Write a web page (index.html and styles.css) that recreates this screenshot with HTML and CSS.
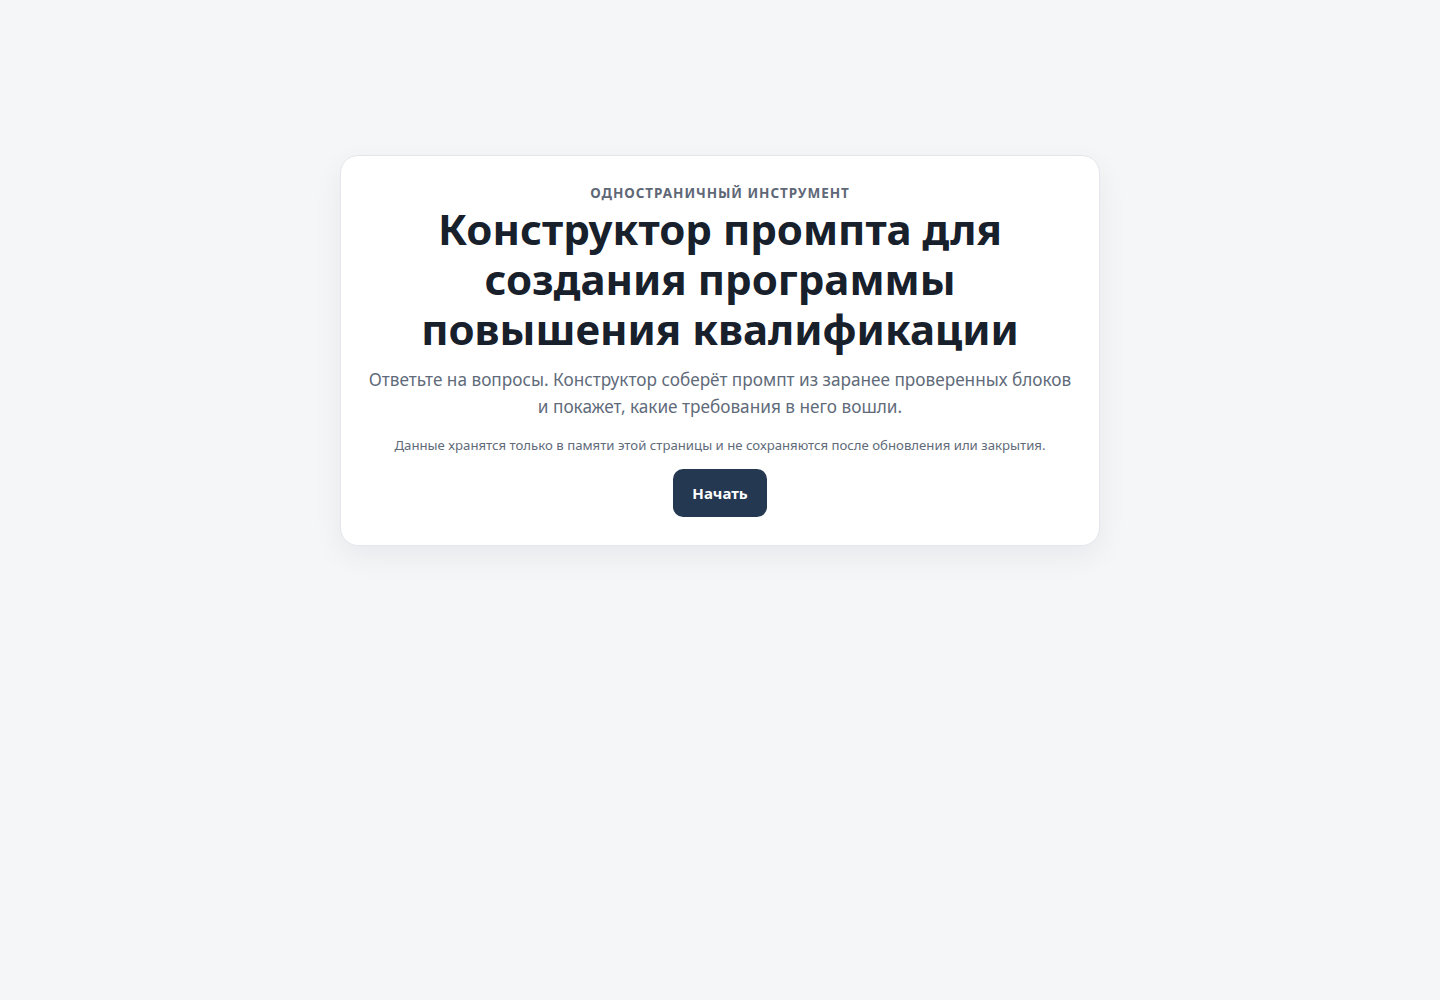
FILE: index.html
```html
<!DOCTYPE html>
<html lang="ru">
<head>
<meta charset="utf-8">
<title>Конструктор промпта</title>
<link rel="stylesheet" href="styles.css">
</head>
<body>
<main class="page">
  <section class="card">
    <div class="eyebrow">Одностраничный инструмент</div>
    <h1 class="title">Конструктор промпта для создания программы повышения квалификации</h1>
    <p class="lead">Ответьте на вопросы. Конструктор соберёт промпт из заранее проверенных блоков и покажет, какие требования в него вошли.</p>
    <p class="note">Данные хранятся только в памяти этой страницы и не сохраняются после обновления или закрытия.</p>
    <button class="btn" type="button">Начать</button>
  </section>
</main>
</body>
</html>
```

FILE: styles.css
```css
html, body {
  margin: 0;
  padding: 0;
}
body {
  background: #f4f6f8;
  font-family: "Noto Sans", "Open Sans", "DejaVu Sans", sans-serif;
  color: #111827;
}
.page {
  display: flex;
  justify-content: center;
  padding: 155px 24px 40px;
}
.card {
  box-sizing: border-box;
  width: 760px;
  background: #ffffff;
  border: 1px solid #e3e6eb;
  border-radius: 18px;
  box-shadow: 0 10px 30px rgba(17, 24, 39, 0.06);
  padding: 27px 27px 28px;
  display: flex;
  flex-direction: column;
  align-items: center;
  text-align: center;
}
.eyebrow {
  font-size: 13.5px;
  font-weight: 700;
  letter-spacing: 0.07em;
  text-transform: uppercase;
  color: #5f6877;
  line-height: 20px;
}
.title {
  margin: 1px 0 0;
  font-size: 42px;
  line-height: 50px;
  font-weight: 700;
  color: #17202b;
  max-width: 640px;
}
.lead {
  margin: 12px 0 0;
  font-size: 17.2px;
  line-height: 27px;
  color: #5f6b7a;
}
.note {
  margin: 15px 0 0;
  font-size: 13.2px;
  line-height: 20px;
  color: #5f6b7a;
}
.btn {
  margin-top: 14px;
  height: 48px;
  padding: 0 19px;
  border: 0;
  border-radius: 10px;
  background: #253852;
  color: #ffffff;
  font-family: inherit;
  font-size: 15px;
  font-weight: 700;
  cursor: pointer;
}
```
